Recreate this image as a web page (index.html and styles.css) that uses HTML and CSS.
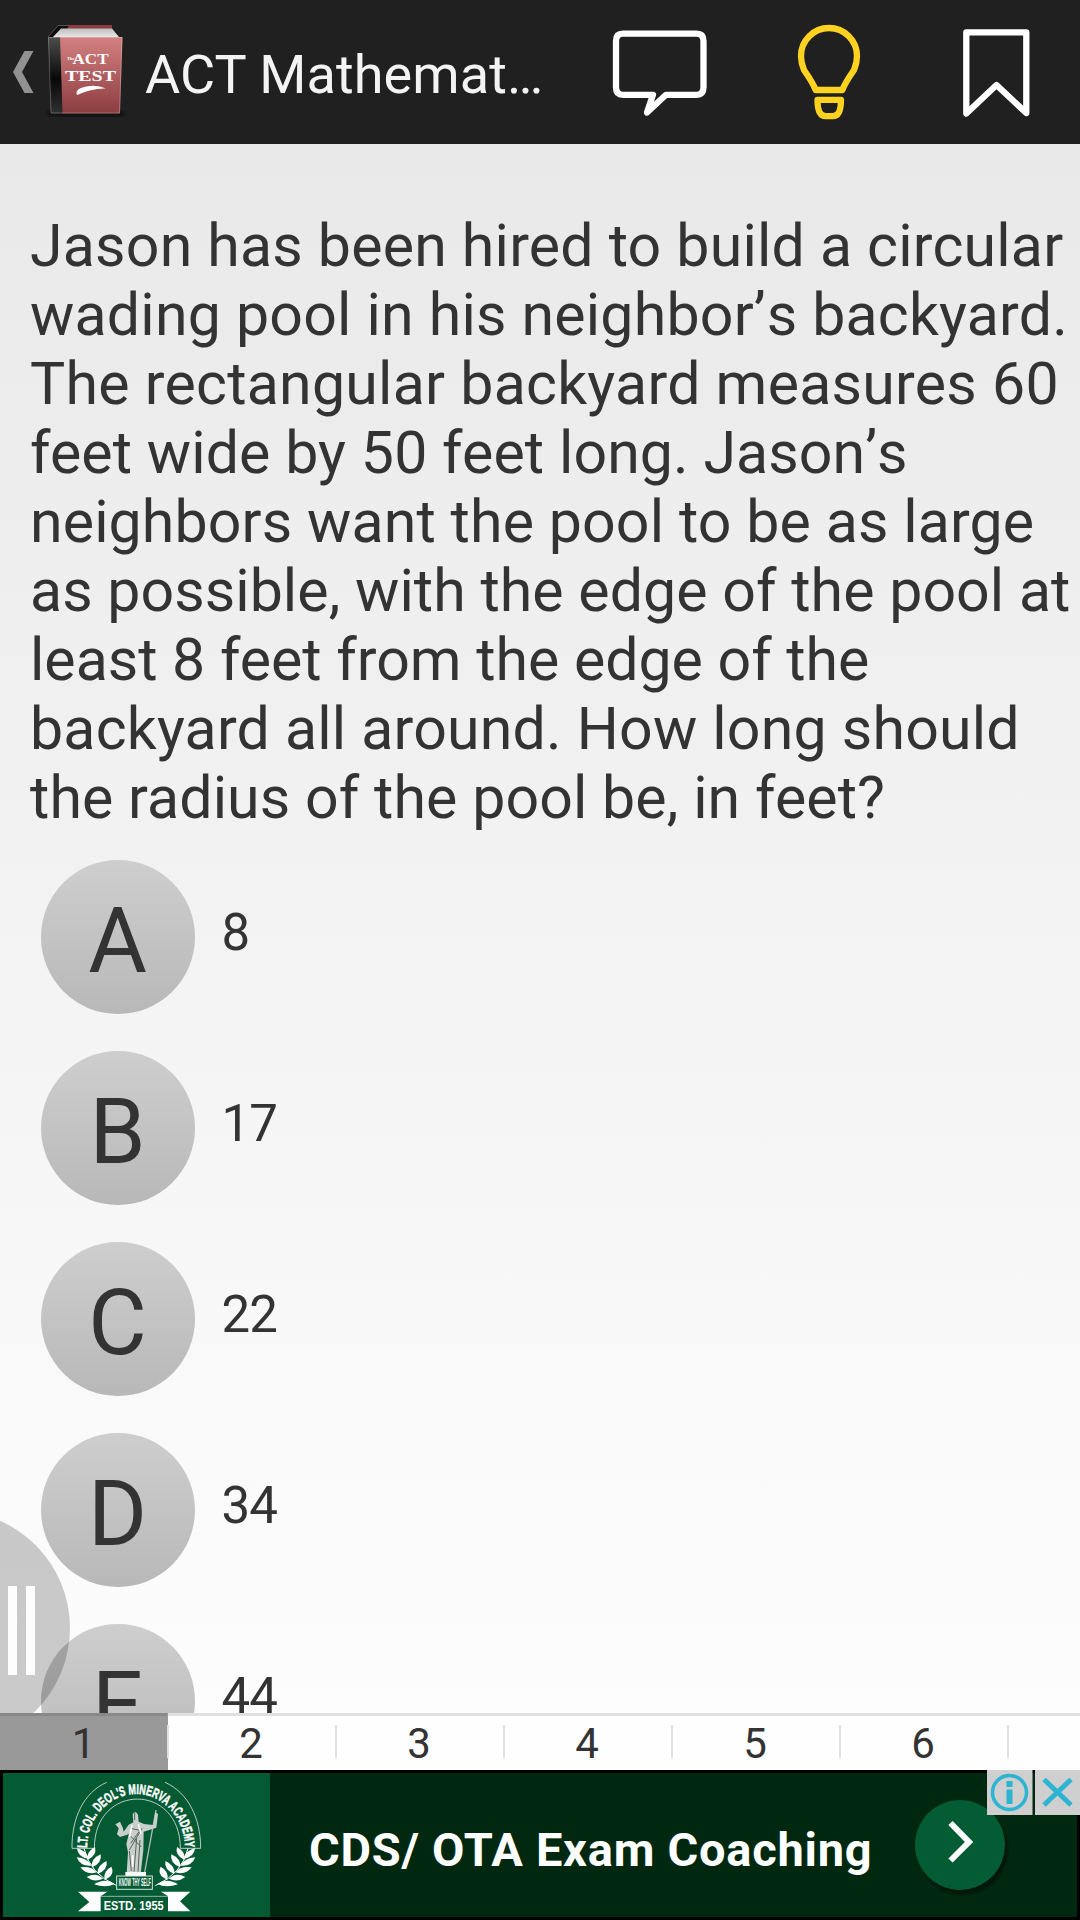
FILE: index.html
```
<!DOCTYPE html>
<html lang="en">
<head>
<meta charset="utf-8">
<title>ACT Mathematics</title>
<link rel="stylesheet" href="styles.css">
</head>
<body>
<div class="app">
  <header class="bar">
    <svg class="home" viewBox="0 0 136 144" width="136" height="144">
      <defs>
        <linearGradient id="cover" x1="0" y1="0" x2="0" y2="1"><stop offset="0" stop-color="#d48080"/><stop offset="1" stop-color="#8c3d40"/></linearGradient>
        <linearGradient id="spine" x1="0" y1="0" x2="0" y2="1"><stop offset="0" stop-color="#4d4d4d"/><stop offset=".55" stop-color="#080808"/><stop offset="1" stop-color="#303030"/></linearGradient>
        <linearGradient id="pages" x1="0" y1="0" x2="0" y2="1"><stop offset="0" stop-color="#bdbdbd"/><stop offset="1" stop-color="#e6e6e6"/></linearGradient>
        <filter id="soft"><feGaussianBlur stdDeviation="1.5"/></filter>
      </defs>
      <path d="M24.5 51H33.5L22 72L33.5 93H24.5L13 72Z" fill="#919191"/>
      <rect x="47" y="111" width="77" height="5" rx="2" fill="#0c0c0c" filter="url(#soft)"/>
      <path d="M48 37L58 25H70V37Z" fill="#120c0c"/>
      <path d="M48 37L58 25.500H70" fill="none" stroke="#555"/>
      <path d="M69 25H112V31H66Z" fill="#8c3b3d"/>
      <path d="M53 37L61 28.500H112L119 37Z" fill="url(#pages)"/>
      <path d="M48 37H61L63 113.500H51Z" fill="url(#spine)"/>
      <path d="M60 37H122.500L120 113.500H62.500Z" fill="url(#cover)"/>
      <path d="M48.500 37.500H122L119.500 113H51Z" fill="none" stroke="#fff" stroke-opacity=".25"/>
      <text class="book" x="72.500" y="64" font-size="15" textLength="36" lengthAdjust="spacingAndGlyphs">ACT</text>
      <text class="book" x="67" y="60" font-size="4.500">The</text>
      <text class="book" x="65" y="81" font-size="14" textLength="51" lengthAdjust="spacingAndGlyphs">TEST</text>
      <path d="M77 95C75 90 80 87 90 86Q98 85 106 88.500Q92 88 77 95Z" fill="#fff"/>
    </svg>
    <h1 class="title">ACT Mathemat…</h1>
    <svg class="actions" viewBox="560 0 520 144" width="520" height="144" fill="none" stroke="#fff" stroke-width="6.300" stroke-linejoin="round">
      <path d="M623 33.700H696.500Q703.500 33.700 703.500 41V87.500Q703.500 94.800 696.500 94.800H666L647 112.500L653 94.800H623Q616 94.800 616 87.500V41Q616 33.700 623 33.700Z"/>
      <g stroke="#fdd221">
        <path d="M815.700 90Q813 83 804 70Q801 63 801 56A27.900 27.900 0 0 1 857 56Q857 63 854 70Q845 83 842.300 90Z"/>
        <path d="M817.500 99.800H841Q841 116.200 833 116.200H825.500Q817.500 116.200 817.500 99.800Z"/>
      </g>
      <path d="M966.300 32.300H1026.300V113L996.500 85L966.300 113.500Z"/>
    </svg>
  </header>
  <main class="content">
    <p class="question">
      <span>Jason has been hired to build a circular</span>
      <span>wading pool in his neighbor<b>’</b>s backyard.</span>
      <span>The rectangular backyard measures 60</span>
      <span>feet wide by 50 feet long. Jason<b>’</b>s</span>
      <span>neighbors want the pool to be as large</span>
      <span>as possible, with the edge of the pool at</span>
      <span>least 8 feet from the edge of the</span>
      <span>backyard all around. How long should</span>
      <span>the radius of the pool be, in feet?</span>
    </p>
    <ul class="options">
      <li><span class="letter">A</span><span class="value">8</span></li>
      <li><span class="letter">B</span><span class="value">17</span></li>
      <li><span class="letter">C</span><span class="value">22</span></li>
      <li><span class="letter">D</span><span class="value">34</span></li>
      <li><span class="letter">E</span><span class="value">44</span></li>
    </ul>
    <div class="handle"><i></i><i></i></div>
  </main>
  <nav class="pager">
    <span class="tab on">1</span><span class="tab">2</span><span class="tab">3</span><span class="tab">4</span><span class="tab">5</span><span class="tab">6</span><span class="tab"></span>
  </nav>
  <aside class="ad">
    <div class="brand">
      <svg viewBox="9 24 801 432" width="267" height="144">
        <defs>
          <path id="ring" d="M261 249A147 162 0 0 1 555 249"/>
          <g id="laurel" fill="#fff">
            <path d="M252 250Q268 325 350 362" fill="none" stroke="#fff" stroke-width="3"/>
            <path d="M231 250Q234 278 265 281Q259 256 231 250Z"/>
            <path d="M230 277Q241 305 275 302Q262 279 230 277Z"/>
            <path d="M241 307Q260 332 290 322Q272 301 241 307Z"/>
            <path d="M260 336Q283 354 309 341Q289 321 260 336Z"/>
            <path d="M282 358Q318 370 344 357Q315 337 282 358Z"/>
            <path d="M285 246Q292 270 263 285Q257 262 285 246Z"/>
            <path d="M302 268Q307 294 276 307Q271 282 302 268Z"/>
            <path d="M320 288Q324 316 293 326Q290 301 320 288Z"/>
            <path d="M334 305Q346 331 314 344Q308 319 334 305Z"/>
          </g>
        </defs>
        <g fill="none" stroke="#d5e5dc" stroke-width="2.500">
          <path d="M320 52C250 83 215 160 216 250H283C283 53 541 53 541 250H602C602 160 565 83 495 52"/>
        </g>
        <text class="seal ring" font-size="42"><textPath href="#ring" textLength="484" lengthAdjust="spacingAndGlyphs">LT. COL. DEOL'S MINERVA ACADEMY</textPath></text>
        <use href="#laurel"/>
        <use href="#laurel" transform="matrix(-1 0 0 1 816 0)"/>
        <path d="M468 135L434 322" stroke="#aebdb5" stroke-width="4"/>
        <path d="M398 148Q406 134 414 149L416 170L432 177L460 180L466 140L474 148L469 188L431 200L430 255L422 326H380L384 262L379 238L386 208L360 216L351 208L356 190L346 178L360 170L369 190L371 200L386 179L400 172Z" fill="#c9cfcb"/>
        <path d="M404 142V165M392 190L420 196L392 235M426 190L388 255M410 220L402 320M420 225L414 320M388 258L394 318M384 206L424 246" fill="none" stroke="#56665e" stroke-width="3"/>
        <path d="M396 180L389 215M415 178L423 206M398 270V305" stroke="#fff" stroke-width="5"/>
        <rect x="376" y="321" width="62" height="12" fill="#fff"/>
        <rect x="350" y="333" width="107" height="40" fill="#045a33" stroke="#d5e5dc" stroke-width="3"/>
        <text class="seal" x="356" y="364" font-size="32" textLength="97" lengthAdjust="spacingAndGlyphs">KNOW THY SELF</text>
        <path d="M234 380H323L302 394V439H234L268 411ZM571 380H482L504 394V439H571L540 409Z" fill="#fff"/>
        <path d="M304 393L322 381V393ZM502 393L484 381V393Z" fill="#045a33"/>
        <path d="M302 394H504" stroke="#d5e5dc" stroke-width="2"/>
        <text class="seal" x="311" y="434" font-size="37" textLength="180" lengthAdjust="spacingAndGlyphs">ESTD. 1955</text>
      </svg>
    </div>
    <div class="slogan">CDS/ OTA Exam Coaching</div>
    <svg class="go" viewBox="0 0 120 120" width="120" height="120">
      <circle cx="63" cy="65" r="45" fill="#000" opacity=".4" filter="url(#soft)"/>
      <circle cx="60" cy="60" r="45" fill="#045c35"/>
      <path d="M50.500 38L69 57L50.500 75.500" fill="none" stroke="#fff" stroke-width="6"/>
    </svg>
    <svg class="choices" viewBox="0 0 93 45" width="93" height="45">
      <path d="M0 0H45.500V45H0ZM48 0H93V45H48Z" fill="#cfcfcf"/>
      <g fill="none" stroke="#2db4d3" stroke-width="3.500">
        <circle cx="22.500" cy="22.500" r="17"/>
        <path d="M22.500 11V17M22.500 19.500V34" stroke-width="6"/>
        <path d="M57 9.500L84 35M84 9.500L57 35" stroke-width="5"/>
      </g>
    </svg>
  </aside>
</div>
</body>
</html>
```
FILE: styles.css
```
* { box-sizing: border-box; }
body { margin: 0; font-family: Roboto, "Open Sans", sans-serif; color: #333; }
.app { width: 1080px; height: 1920px; display: flex; flex-direction: column; overflow: hidden; }

.bar { height: 144px; flex: none; display: flex; background: #202020; }
.home, .actions { flex: none; display: block; }
.title { flex: 1; margin: 0 0 0 9px; font-size: 54px; font-weight: 400; line-height: 149px; color: #f3f3f3; white-space: nowrap; letter-spacing: .1px; }
.book { font-family: "Liberation Serif", serif; font-weight: 700; fill: #fff; }

.content { position: relative; flex: 1; min-height: 0; overflow: hidden; padding-top: 67px; background: linear-gradient(#e9e9e9, #fdfdfd); }
.question { margin: 0 0 27.5px 30px; font-size: 59px; line-height: 69px; white-space: nowrap; }
.question span { display: block; letter-spacing: .22px; }
.question b { font-weight: 400; letter-spacing: 1px; }
.question span:nth-child(3) { letter-spacing: .27px; }
.question span:nth-child(4) { letter-spacing: .1px; }
.question span:nth-child(4) b { letter-spacing: 0; }
.question span:nth-child(5) { letter-spacing: .13px; }
.question span:nth-child(6) { letter-spacing: .06px; }
.question span:nth-child(7) { letter-spacing: 0; }
.question span:nth-child(9) { letter-spacing: .1px; }

.options { list-style: none; margin: 0; padding: 0 0 0 40.5px; display: flex; flex-direction: column; gap: 37px; }
.options li { display: flex; gap: 27px; height: 154px; }
.letter { width: 154px; height: 154px; border-radius: 50%; background: linear-gradient(#cecece, #b8b8b8); font-size: 90px; line-height: 163px; text-align: center; }
.value { font-size: 51px; line-height: 146px; letter-spacing: -.8px; }

.handle { position: absolute; left: -164px; top: 1367px; width: 234px; height: 234px; border-radius: 50%; background: rgba(0, 0, 0, .2); display: flex; gap: 9px; padding: 75px 0 0 172px; }
.handle i { width: 9px; height: 89px; background: #fdfdfd; }

.pager { height: 57px; flex: none; display: flex; background: #fefefe; border-top: 3px solid #e0e0e0; }
.tab { width: 168px; flex: none; font-size: 42px; line-height: 55px; text-align: center; background: linear-gradient(#e0e0e0, #e0e0e0) 0 9px / 2px 33px no-repeat; }
.tab.on { margin-top: -3px; width: 167px; padding-top: 3px; background: #999; box-shadow: 1px 0 #999, inset 0 3px #888; }

.ad { position: relative; height: 150px; flex: none; display: flex; background: #002810; border: 3px solid #000; }
.brand { width: 267px; background: #045a33; }
.brand svg { display: block; }
.seal { font-family: "Liberation Sans Narrow", "Liberation Sans", sans-serif; font-weight: 700; fill: #fff; }
.ring { stroke: #fff; stroke-width: 1.5px; }
.slogan { margin-left: 39px; width: 591px; font-size: 47px; font-weight: 700; line-height: 153px; letter-spacing: .75px; color: #fff; white-space: nowrap; }
.go { margin-top: 12px; }
.choices { position: absolute; right: -3px; top: -3px; }
```
